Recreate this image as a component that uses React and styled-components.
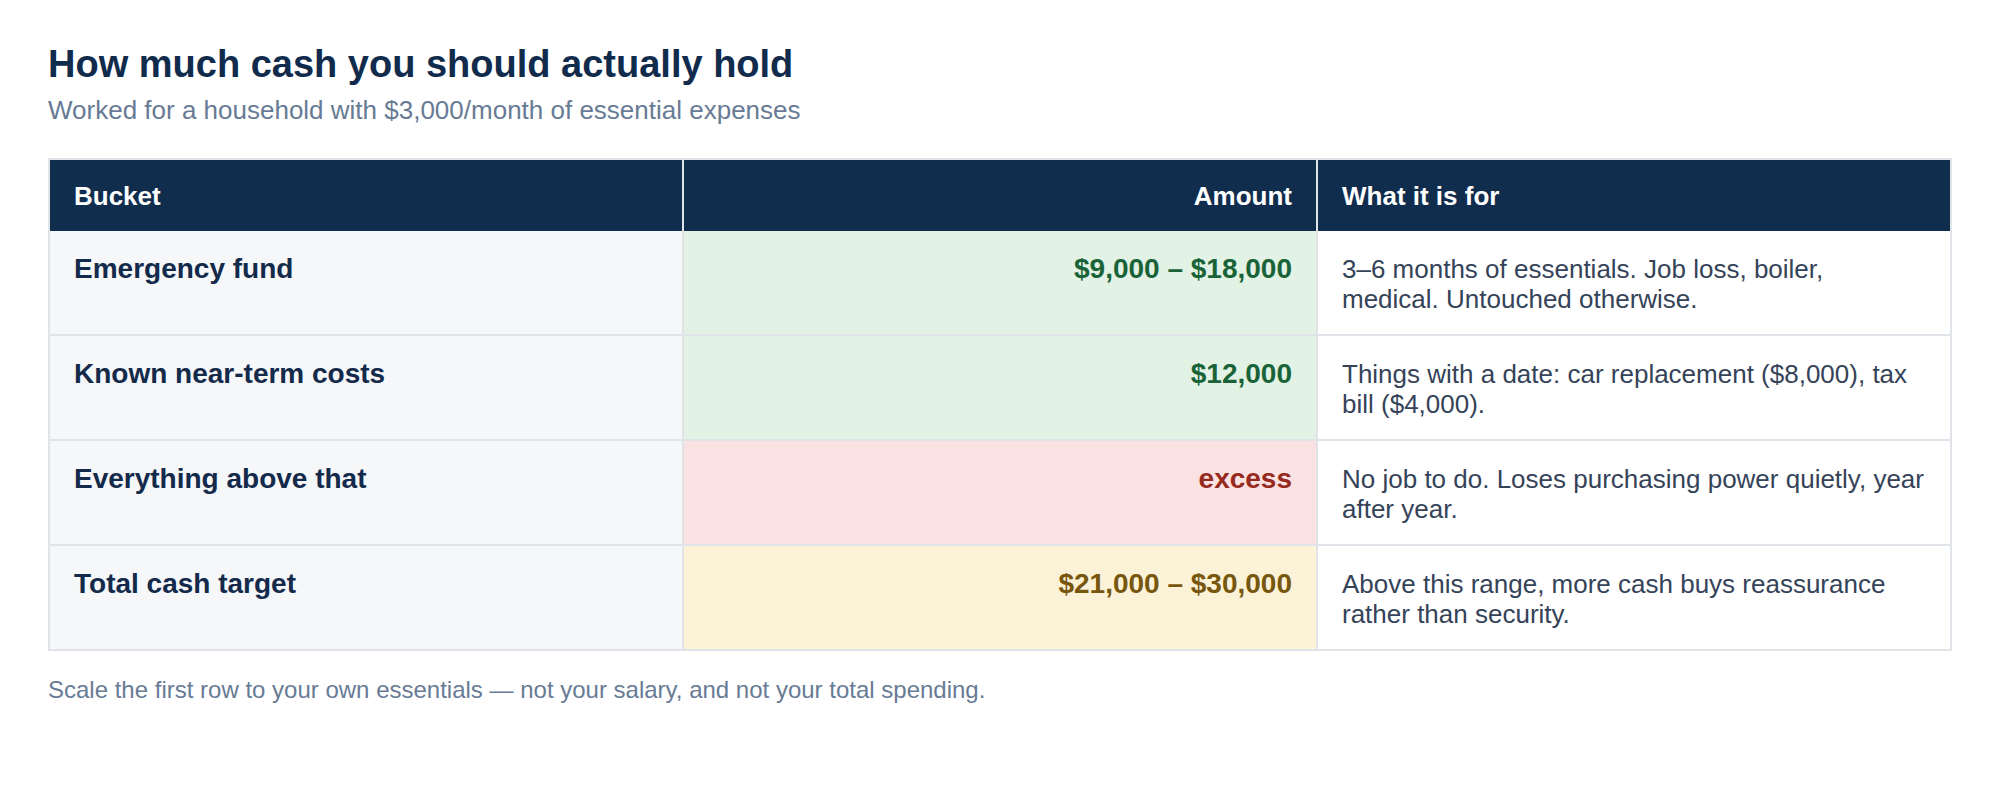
import React from 'react';
import styled, { createGlobalStyle } from 'styled-components';

const GlobalStyle = createGlobalStyle`
  html, body {
    margin: 0;
    padding: 0;
    background: #ffffff;
  }
  body {
    font-family: 'Liberation Sans', Arial, sans-serif;
  }
`;

const Page = styled.div`
  box-sizing: border-box;
  width: 100%;
  padding: 43px 48px 40px;
`;

const Title = styled.h1`
  margin: 0;
  font-size: 38px;
  font-weight: 700;
  line-height: normal;
  color: #112b4d;
`;

const Subtitle = styled.p`
  margin: 9px 0 0;
  font-size: 26px;
  line-height: normal;
  color: #687b95;
`;

const Table = styled.table`
  width: 100%;
  margin-top: 32px;
  table-layout: fixed;
  border-collapse: separate;
  border-spacing: 0;
  border-top: 2px solid #e0e4e9;
  border-left: 2px solid #e0e4e9;
`;

const HeadCell = styled.th`
  padding: 20.5px 24px;
  background: #112d4e;
  color: #ffffff;
  font-size: 26px;
  font-weight: 700;
  line-height: 30px;
  text-align: ${(props) => props.align ?? 'left'};
  border-right: 2px solid #e0e4e9;
`;

const Cell = styled.td`
  padding: 23px 24px 20px;
  vertical-align: top;
  line-height: 30px;
  border-right: 2px solid #e0e4e9;
  border-bottom: 2px solid #e0e4e9;
`;

const BucketCell = styled(Cell)`
  background: #f5f7f9;
  color: #132a4b;
  font-size: 28px;
  font-weight: 700;
`;

const AmountCell = styled(Cell)`
  background: ${(props) => props.bg};
  color: ${(props) => props.color};
  font-size: 28px;
  font-weight: 700;
  text-align: right;
`;

const NoteCell = styled(Cell)`
  background: #ffffff;
  color: #354359;
  font-size: 26px;
`;

const Footnote = styled.p`
  margin: 25px 0 0;
  font-size: 24px;
  line-height: normal;
  color: #687b95;
`;

const tones = {
  green: { bg: '#e2f2e5', color: '#1a6338' },
  red: { bg: '#fae2e2', color: '#962a1e' },
  yellow: { bg: '#fcf2d8', color: '#77560e' },
};

const rows = [
  {
    bucket: 'Emergency fund',
    amount: '$9,000 – $18,000',
    tone: 'green',
    note: '3–6 months of essentials. Job loss, boiler, medical. Untouched otherwise.',
  },
  {
    bucket: 'Known near-term costs',
    amount: '$12,000',
    tone: 'green',
    note: 'Things with a date: car replacement ($8,000), tax bill ($4,000).',
  },
  {
    bucket: 'Everything above that',
    amount: 'excess',
    tone: 'red',
    note: 'No job to do. Loses purchasing power quietly, year after year.',
  },
  {
    bucket: 'Total cash target',
    amount: '$21,000 – $30,000',
    tone: 'yellow',
    note: 'Above this range, more cash buys reassurance rather than security.',
  },
];

export default function App() {
  return (
    <Page>
      <GlobalStyle />
      <Title>How much cash you should actually hold</Title>
      <Subtitle>Worked for a household with $3,000/month of essential expenses</Subtitle>
      <Table>
        <thead>
          <tr>
            <HeadCell>Bucket</HeadCell>
            <HeadCell align='right'>Amount</HeadCell>
            <HeadCell>What it is for</HeadCell>
          </tr>
        </thead>
        <tbody>
          {rows.map((row, index) => (
            <tr key={index}>
              <BucketCell>{row.bucket}</BucketCell>
              <AmountCell bg={tones[row.tone].bg} color={tones[row.tone].color}>
                {row.amount}
              </AmountCell>
              <NoteCell>{row.note}</NoteCell>
            </tr>
          ))}
        </tbody>
      </Table>
      <Footnote>
        Scale the first row to your own essentials — not your salary, and not your total spending.
      </Footnote>
    </Page>
  );
}
